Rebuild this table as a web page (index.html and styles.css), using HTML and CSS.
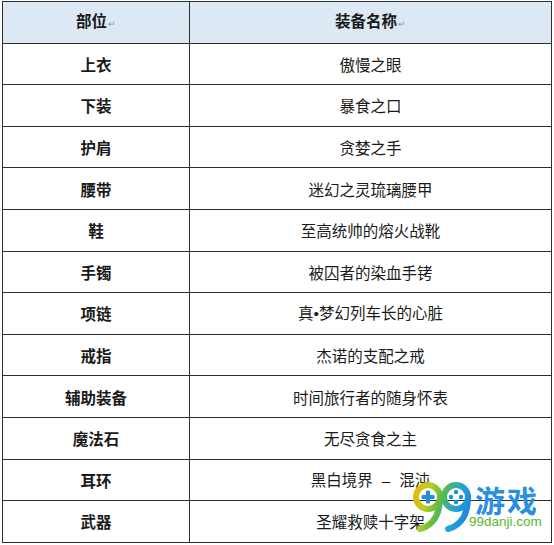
FILE: index.html
```html
<!DOCTYPE html>
<html>
<head>
<meta charset="utf-8">
<link rel="stylesheet" href="styles.css">
</head>
<body>
<div class="wrap">
<table class="gear">
<colgroup><col class="c1"><col class="c2"></colgroup>
<thead>
<tr><th>部位<span class="mark">↵</span></th><th>装备名称<span class="mark">↵</span></th></tr>
</thead>
<tbody>
<tr><td class="part">上衣</td><td>傲慢之眼</td></tr>
<tr><td class="part">下装</td><td>暴食之口</td></tr>
<tr><td class="part">护肩</td><td>贪婪之手</td></tr>
<tr><td class="part">腰带</td><td>迷幻之灵琉璃腰甲</td></tr>
<tr><td class="part">鞋</td><td>至高统帅的熔火战靴</td></tr>
<tr><td class="part">手镯</td><td>被囚者的染血手铐</td></tr>
<tr><td class="part">项链</td><td>真<span class="latin">•</span>梦幻列车长的心脏</td></tr>
<tr><td class="part">戒指</td><td>杰诺的支配之戒</td></tr>
<tr><td class="part">辅助装备</td><td>时间旅行者的随身怀表</td></tr>
<tr><td class="part">魔法石</td><td>无尽贪食之主</td></tr>
<tr><td class="part">耳环</td><td>黑白境界<span class="latin dash">–</span>混沌</td></tr>
<tr><td class="part">武器</td><td>圣耀救赎十字架</td></tr>
</tbody>
</table>
<div class="logo">
<svg class="nines" width="62" height="52" viewBox="0 0 62 52">
<defs>
<linearGradient id="g" x1="0" y1="0" x2="62" y2="20" gradientUnits="userSpaceOnUse">
<stop offset="0" stop-color="#f6b400"/>
<stop offset="0.3" stop-color="#b9cf1e"/>
<stop offset="0.5" stop-color="#5dbb47"/>
<stop offset="0.75" stop-color="#25a3d6"/>
<stop offset="1" stop-color="#1c86e3"/>
</linearGradient>
</defs>
<g fill="none" stroke="url(#g)" stroke-width="6" stroke-linecap="round">
<circle cx="16" cy="16" r="12"/>
<path d="M28 16 C28 32 22 44 8 48"/>
<circle cx="44" cy="16" r="12"/>
<path d="M56 16 C56 32 50 44 36 48"/>
</g>
<g fill="#1f8fe0">
<rect x="9.5" y="14" width="13" height="4" rx="1"/>
<rect x="14" y="9.5" width="4" height="13" rx="1"/>
<circle cx="44" cy="11" r="2.2"/>
<circle cx="44" cy="21" r="2.2"/>
<circle cx="39" cy="16" r="2.2"/>
<circle cx="49" cy="16" r="2.2"/>
</g>
</svg>
<div class="brand">
<span class="cn">游戏</span>
<span class="url">99danji.com</span>
</div>
</div>
</div>
</body>
</html>
```
FILE: styles.css
```css
html, body {
  margin: 0;
  padding: 0;
  background: #ffffff;
}
.wrap {
  position: relative;
  padding: 1px 2px 0 2px;
  width: 550px;
}
.gear {
  border-collapse: collapse;
  width: 550px;
  table-layout: fixed;
  font-family: "Noto Sans CJK SC", "Microsoft YaHei", sans-serif;
  font-size: 15.5px;
  color: #1a1a1a;
}
.c1 { width: 187px; }
.gear th, .gear td {
  border: 1.5px solid #2e2e2e;
  height: 40.6px;
  padding: 0;
  text-align: center;
  vertical-align: middle;
  line-height: 18px;
}
.gear th {
  background: #dde8f5;
  font-weight: 700;
}
.gear td.part {
  font-weight: 700;
}
.latin {
  font-family: "Liberation Sans", Arial, sans-serif;
}
.dash {
  margin: 0 9px;
}
.mark {
  font-size: 9px;
  color: #9a9a9a;
  font-weight: 400;
  margin-left: 1px;
}
.logo {
  position: absolute;
  left: 412px;
  top: 481px;
  display: flex;
  align-items: flex-start;
}
.nines {
  display: block;
}
.brand {
  display: flex;
  flex-direction: column;
  margin-left: 1px;
  margin-top: 2px;
}
.cn {
  font-family: "Noto Sans CJK SC", sans-serif;
  font-weight: 700;
  font-size: 30px;
  line-height: 32px;
  color: #2a8fe3;
  letter-spacing: 2px;
}
.url {
  font-family: "Liberation Sans", Arial, sans-serif;
  font-size: 13.5px;
  line-height: 13px;
  color: #56b62c;
  margin-left: -6px;
}
```
